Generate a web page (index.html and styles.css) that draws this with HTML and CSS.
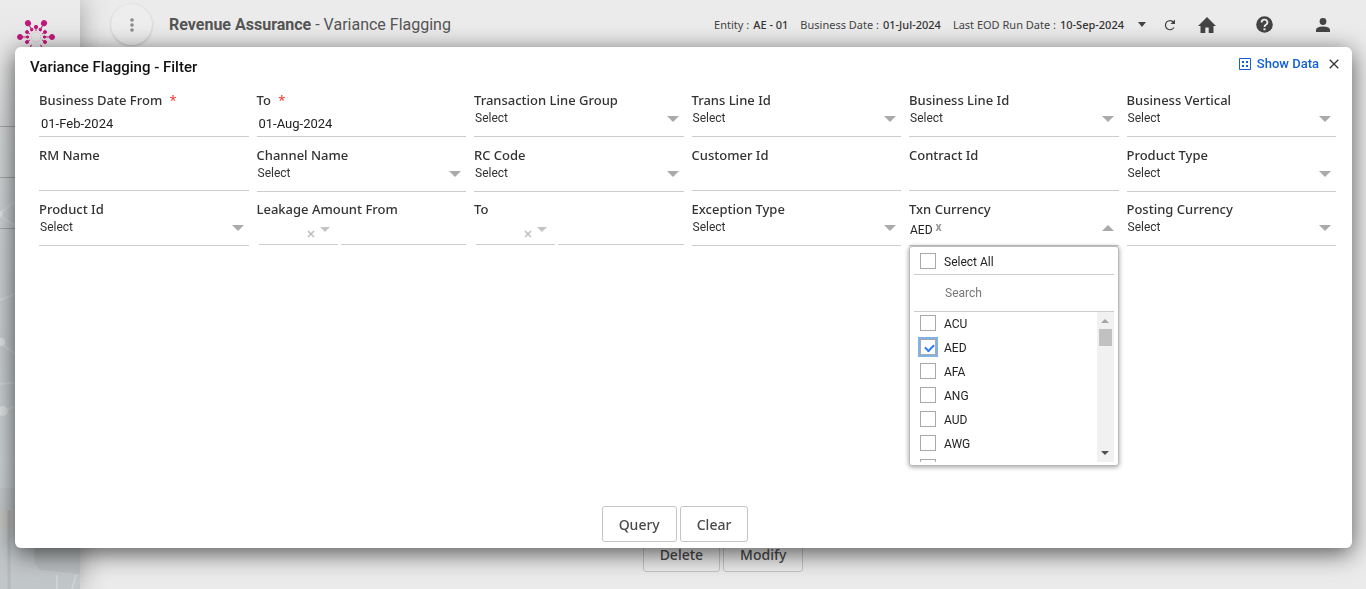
FILE: index.html
```html
<!DOCTYPE html>
<html lang="en">
<head>
<meta charset="utf-8">
<title>Revenue Assurance - Variance Flagging</title>
<link rel="stylesheet" href="styles.css">
</head>
<body>
<div class="app">
  <aside class="sidebar">
    <svg class="scenery" viewBox="0 0 80 589" preserveAspectRatio="none" aria-hidden="true">
      <path d="M0 126.500H80M0 177.500H80M0 228.500H80" stroke="#a5a8aa"/>
      <path d="M0 213L20 198M0 216L20 229M0 343L20 357M0 300L20 292M0 412L20 404M0 384L20 382" stroke="#dde2e4" stroke-width="2" opacity=".5"/>
      <circle cx="0" cy="214" r="3" fill="#dfe3e5"/><circle cx="3" cy="411" r="5" fill="#dfe1e2"/><circle cx="1" cy="342" r="4" fill="#dfe1e2"/>
      <path d="M0 488H80V589H0Z" fill="#c0c4c6" opacity=".6"/>
      <path d="M0 510H20V528H0Z" fill="#c6c6c3"/>
      <path d="M9 510V589" stroke="#b5b9bb" stroke-width="3"/>
      <path d="M34 545H80V574L40 570Q34 565 34 558Z" fill="#b8bcbe"/>
      <path d="M57 575V589M76 575L72 589" stroke="#ccd2d5" stroke-width="2"/>
    </svg>
    <svg class="logo" viewBox="0 0 40 40" aria-hidden="true">
      <g fill="#c2187c" stroke="#c2187c">
        <g><circle cx="3" cy="20" r="2.500"/><path d="M3 20H10"/><circle cx="10.500" cy="20" r="1.200"/></g>
        <g transform="rotate(60 19 20)"><circle cx="3" cy="20" r="2.500"/><path d="M3 20H10"/><circle cx="10.500" cy="20" r="1.200"/></g>
        <g transform="rotate(120 19 20)"><circle cx="3" cy="20" r="2.500"/><path d="M3 20H10"/><circle cx="10.500" cy="20" r="1.200"/></g>
        <g transform="rotate(180 19 20)"><circle cx="3" cy="20" r="2.500"/><path d="M3 20H10"/><circle cx="10.500" cy="20" r="1.200"/></g>
        <g transform="rotate(240 19 20)"><circle cx="3" cy="20" r="2.500"/><path d="M3 20H10"/></g>
        <g transform="rotate(300 19 20)"><circle cx="3" cy="20" r="2.500"/><path d="M3 20H10"/></g>
        <circle cx="19" cy="10" r="1.700"/><path d="M19 10V14"/>
        <circle cx="10" cy="15" r="1.500"/><path d="M10 15L13 17"/>
        <circle cx="28" cy="15" r="1.500"/><path d="M28 15L25 17"/>
        <circle cx="10" cy="25" r="1.500"/><path d="M10 25L13 23"/>
        <circle cx="28" cy="25" r="1.500"/><path d="M28 25L25 23"/>
      </g>
      <circle cx="19" cy="20" r="5" fill="none" stroke="#dda5c4" stroke-dasharray="1 1.600"/>
    </svg>
  </aside>
  <div class="page">
    <header class="topbar">
      <button class="menu" type="button" aria-label="Menu">
        <svg width="4" height="16" viewBox="0 0 4 16"><g fill="#8b8b8b"><circle cx="2" cy="3" r="1.800"/><circle cx="2" cy="8" r="1.800"/><circle cx="2" cy="13" r="1.800"/></g></svg>
      </button>
      <h1 class="title"><b>Revenue Assurance</b> - Variance Flagging</h1>
      <dl class="facts">
        <div><dt>Entity :</dt><dd>AE - 01</dd></div>
        <div><dt>Business Date :</dt><dd>01-Jul-2024</dd></div>
        <div><dt>Last EOD Run Date :</dt><dd>10-Sep-2024</dd></div>
      </dl>
      <nav class="tools" aria-label="Tools">
        <button class="tool" type="button" aria-label="More"><svg width="8" height="5" viewBox="0 0 8 5"><path d="M0 0H8L4 5Z" fill="#444"/></svg></button>
        <button class="tool refresh" type="button" aria-label="Refresh"><svg width="12" height="12" viewBox="0 0 12 12"><path d="M10 8.500A4.600 4.600 0 1 1 9.600 3.200" fill="none" stroke="#444" stroke-width="1.200"/><path d="M11 .5V5H6.500Z" fill="#444"/></svg></button>
        <button class="tool home" type="button" aria-label="Home"><svg width="18" height="16" viewBox="0 0 18 16"><path d="M9 0L18 9H15.500V16H10.700V10.500H7.300V16H2.500V9H0Z" fill="#444"/></svg></button>
        <button class="tool help" type="button" aria-label="Help"><svg width="17" height="17" viewBox="0 0 17 17"><circle cx="8.500" cy="8.500" r="8.300" fill="#444"/><path d="M5.600 6.500A2.900 2.700 0 1 1 9.800 8.700Q8.500 9.500 8.500 11" fill="none" stroke="#ebebeb" stroke-width="1.800"/><path d="M7.500 12.300H9.500V14.300H7.500Z" fill="#ebebeb"/></svg></button>
        <button class="tool user" type="button" aria-label="Profile"><svg width="14" height="14" viewBox="0 0 14 14"><circle cx="7" cy="3.500" r="3.400" fill="#444"/><path d="M0 14V12Q0 8.500 7 8.500T14 12V14Z" fill="#444"/></svg></button>
      </nav>
    </header>
    <footer class="page-actions">
      <button class="btn" type="button">Delete</button>
      <button class="btn" type="button">Modify</button>
    </footer>
  </div>
</div>

<section class="dialog" role="dialog" aria-labelledby="dialog-title">
  <div class="dialog-head">
    <h2 class="dialog-title" id="dialog-title">Variance Flagging - Filter</h2>
    <a class="show-data" href="#data">
      <svg width="12" height="12" viewBox="0 0 12 12"><path d="M.5 .5H11.500V11.500H.5Z" fill="none" stroke="#1260d8"/><path d="M3 3H5V5H3ZM7 3H9V5H7ZM3 7H5V9H3ZM7 7H9V9H7Z" fill="#1260d8"/></svg>
      Show Data</a>
    <button class="close" type="button" aria-label="Close"><svg width="10" height="10" viewBox="0 0 10 10"><path d="M.7 .7L9.300 9.300M9.300 .7L.7 9.300" stroke="#333" stroke-width="1.300"/></svg></button>
  </div>

  <form class="filters">
    <div class="field"><label for="from">Business Date From <span class="req">*</span></label><input class="text" id="from" value="01-Feb-2024"></div>
    <div class="field"><label for="to">To <span class="req">*</span></label><input class="text" id="to" value="01-Aug-2024"></div>
    <div class="field pick"><label for="group">Transaction Line Group</label><select id="group"><option>Select</option></select></div>
    <div class="field pick"><label for="trans">Trans Line Id</label><select id="trans"><option>Select</option></select></div>
    <div class="field pick"><label for="bline">Business Line Id</label><select id="bline"><option>Select</option></select></div>
    <div class="field pick"><label for="vertical">Business Vertical</label><select id="vertical"><option>Select</option></select></div>

    <div class="field"><label for="rm">RM Name</label><input class="text plain" id="rm"></div>
    <div class="field pick"><label for="channel">Channel Name</label><select id="channel"><option>Select</option></select></div>
    <div class="field pick"><label for="rc">RC Code</label><select id="rc"><option>Select</option></select></div>
    <div class="field"><label for="customer">Customer Id</label><input class="text plain" id="customer"></div>
    <div class="field"><label for="contract">Contract Id</label><input class="text plain" id="contract"></div>
    <div class="field pick"><label for="ptype">Product Type</label><select id="ptype"><option>Select</option></select></div>

    <div class="field pick"><label for="product">Product Id</label><select id="product"><option>Select</option></select></div>
    <div class="field"><label for="leak-from">Leakage Amount From</label>
      <div class="amount"><button class="unit" type="button" aria-label="Currency"><svg width="24" height="12" viewBox="0 0 24 12"><path d="M2 5L8 11M8 5L2 11" stroke="#bdbdbd" stroke-width="1.500"/><path d="M14 1H24L19 6Z" fill="#c4c4c4"/></svg></button><input class="sum" id="leak-from"></div></div>
    <div class="field"><label for="leak-to">To</label>
      <div class="amount"><button class="unit" type="button" aria-label="Currency"><svg width="24" height="12" viewBox="0 0 24 12"><path d="M2 5L8 11M8 5L2 11" stroke="#bdbdbd" stroke-width="1.500"/><path d="M14 1H24L19 6Z" fill="#c4c4c4"/></svg></button><input class="sum" id="leak-to"></div></div>
    <div class="field pick"><label for="exception">Exception Type</label><select id="exception"><option>Select</option></select></div>
    <div class="field pick open"><label for="currency">Txn Currency</label>
      <button class="chosen" id="currency" type="button" aria-expanded="true"><span>AED</span><span class="remove">x</span></button>
      <div class="drop">
        <label class="option all"><input type="checkbox">Select All</label>
        <input class="search" placeholder="Search" aria-label="Search">
        <div class="list">
          <div class="options">
            <label class="option"><input type="checkbox">ACU</label>
            <label class="option"><input class="focused" type="checkbox" checked>AED</label>
            <label class="option"><input type="checkbox">AFA</label>
            <label class="option"><input type="checkbox">ANG</label>
            <label class="option"><input type="checkbox">AUD</label>
            <label class="option"><input type="checkbox">AWG</label>
            <label class="option"><input type="checkbox" aria-label="Next currency"></label>
          </div>
          <div class="scroll" aria-hidden="true">
            <svg width="8" height="4" viewBox="0 0 8 4"><path d="M0 4H8L4 0Z" fill="#a3a3a3"/></svg>
            <span class="thumb"></span>
            <svg width="8" height="4" viewBox="0 0 8 4"><path d="M0 0H8L4 4Z" fill="#505050"/></svg>
          </div>
        </div>
      </div>
    </div>
    <div class="field pick"><label for="posting">Posting Currency</label><select id="posting"><option>Select</option></select></div>
  </form>

  <div class="dialog-actions">
    <button class="btn" type="button">Query</button>
    <button class="btn" type="button">Clear</button>
  </div>
</section>
</body>
</html>
```

FILE: styles.css
```css
* { box-sizing: border-box; }
body { margin: 0; background: #ebebeb; font-family: Roboto, sans-serif; font-size: 12px; color: #222; }
button, input, select { font: inherit; color: inherit; margin: 0; padding: 0; border: 0; background: none; border-radius: 0; outline: 0; }
svg { display: block; flex: none; }

.app { display: flex; min-height: 100vh; }
.sidebar { position: relative; width: 80px; flex: none; padding: 17px 0 0 17px;
  background: linear-gradient(#ebebeb 0, #e6e6e6 60px, #d3d6d8 130px, #ccd0d2 240px, #c7ccce 350px, #ccd2d5 460px, #c4c7c9 589px);
  box-shadow: 0 0 28px rgba(0, 0, 0, .35); }
.scenery { position: absolute; inset: 0; width: 100%; height: 100%; }
.logo { position: relative; width: 40px; height: 40px; }

.page { flex: 1; display: flex; flex-direction: column; justify-content: space-between; }
.topbar { display: flex; align-items: center; height: 49px; padding: 0 36px 0 31px; }
.menu { width: 41px; height: 41px; border-radius: 50%; display: flex; align-items: center; justify-content: center; background: #ededed; box-shadow: 0 1px 3px rgba(0, 0, 0, .18); }
.title { margin: 0 auto 0 17px; font-size: 16px; line-height: 20px; font-weight: 400; color: #555; }
.title b { font-weight: 700; }
.facts { display: flex; gap: 12px; margin: 0; font: 11px/16px "Noto Sans", sans-serif; color: #444; }
.facts div { display: flex; gap: 4px; }
.facts dd { margin: 0; font-weight: 500; color: #333; }
.tools { display: flex; align-items: center; margin-left: 14px; }
.refresh { margin-left: 18px; }
.home { margin-left: 22px; }
.help { margin-left: 40px; }
.user { margin-left: 43px; }

.btn { height: 36px; padding: 1px 16px 0; border: 1px solid #c4c4c4; border-radius: 3px; font: 500 14px/20px "Noto Sans", sans-serif; color: #4a4a4a; }
.page-actions { display: flex; justify-content: center; gap: 3px; padding-bottom: 17px; }

.dialog { position: fixed; top: 47px; left: 15px; right: 14px; bottom: 41px; display: flex; flex-direction: column;
  background: #fff; border-radius: 6px; box-shadow: 0 5px 24px rgba(0, 0, 0, .65); }
.dialog-head { display: flex; align-items: center; height: 34px; padding: 0 13px 0 15px; }
.dialog-title { margin: 0 auto 0 0; padding-top: 6px; font-size: 15px; line-height: 20px; font-weight: 500; color: #111; }
.show-data { display: flex; align-items: center; gap: 6px; margin-right: 10px; font-size: 13px; line-height: 16px; font-weight: 500; color: #1260d8; text-decoration: none; }

.filters { display: grid; grid-template-columns: repeat(6, minmax(0, 1fr)); grid-template-rows: 46px 45px 45px; column-gap: 8px; row-gap: 9px; align-items: start; padding: 11px 16px 0 24px; }
.field { position: relative; display: flex; flex-direction: column; }
.field > label { font: 500 13px/17px "Noto Sans", sans-serif; color: #333; white-space: nowrap; }
.req { margin-left: 4px; color: #f44336; }
.text { width: 100%; height: 28px; padding: 2px 2px 0; border-bottom: 1px solid #ccc; font-size: 13px; }
.plain { height: 27px; }
.pick select { width: 100%; height: 28px; padding: 0 24px 10px 1px; border-bottom: 1px solid #ccc; appearance: none; color: #333; }
.pick::after { content: ""; position: absolute; right: 5px; top: 24px; border: 6px solid transparent; border-top-color: #aaa; border-bottom: 0; }
.open::after { border-top: 0; border-bottom: 6px solid #aaa; }
.amount { display: flex; gap: 3px; height: 27px; padding-left: 2px; }
.unit { width: 79px; flex: none; display: flex; justify-content: flex-end; align-items: center; padding: 2px 8px 0 0; border-bottom: 1px solid #ccc; }
.sum { flex: 1; min-width: 0; border-bottom: 1px solid #ccc; }
.chosen { display: flex; align-items: center; gap: 3px; height: 28px; padding: 0 0 3px 1px; border-bottom: 1px solid #ccc; }
.remove { padding-bottom: 6px; font: 700 12px/12px Roboto, sans-serif; color: #999; }

.drop { position: absolute; top: 45px; left: 0; right: 0; height: 220px; padding: 3px 4px; display: flex; flex-direction: column; background: #fff; border: 1px solid #bbb; border-radius: 3px; box-shadow: 0 1px 5px rgba(0, 0, 0, .4); z-index: 2; }
.option { display: flex; align-items: center; gap: 8px; height: 24px; flex: none; padding-left: 6px; line-height: 16px; }
.option input { position: relative; appearance: none; width: 16px; height: 16px; margin-bottom: 2px; border: 1px solid #aaa; background: #fff; }
.option input:checked::after { content: ""; position: absolute; left: 4px; top: 4px; width: 7px; height: 4px; border: solid #2979ff; border-width: 0 0 2px 2px; transform: rotate(-45deg); }
.option .focused { box-shadow: 0 0 0 2px #80b2e3; }
.all { height: 25px; border-bottom: 1px solid #ccc; }
.search { height: 37px; padding: 0 31px; border-bottom: 1px solid #ccc; }
.search::placeholder { color: #777; }
.list { display: flex; height: 150px; overflow: hidden; }
.options { flex: 1; overflow: hidden; }
.scroll { width: 17px; display: flex; flex-direction: column; align-items: center; padding: 7px 0; background: #f1f1f1; }
.thumb { width: 13px; height: 17px; margin: 6px 0 auto; background: #c1c1c1; }

.dialog-actions { display: flex; justify-content: center; gap: 3px; margin-top: auto; padding: 0 17px 6px 0; }
.dialog-actions .btn { background: #fff; }
```
